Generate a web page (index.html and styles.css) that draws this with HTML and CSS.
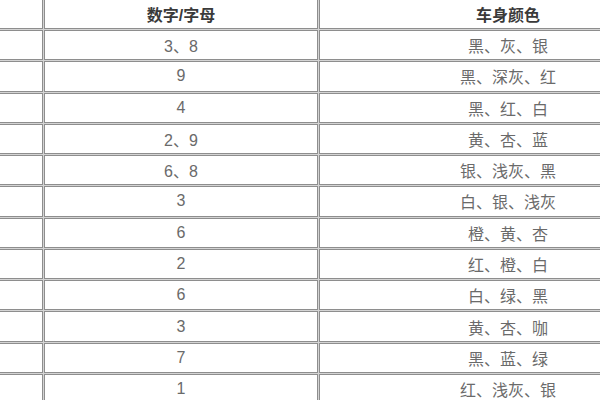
FILE: index.html
```html
<!DOCTYPE html>
<html lang="zh-CN">
<head>
<meta charset="utf-8">
<title>车牌与车身颜色</title>
<link rel="stylesheet" href="styles.css">
</head>
<body>
<div class="sheet">
  <div class="cell head"></div><div class="cell head">数字/字母</div><div class="cell head">车身颜色</div>
  <div class="cell"></div><div class="cell">3、8</div><div class="cell">黑、灰、银</div>
  <div class="cell"></div><div class="cell">9</div><div class="cell">黑、深灰、红</div>
  <div class="cell"></div><div class="cell">4</div><div class="cell">黑、红、白</div>
  <div class="cell"></div><div class="cell">2、9</div><div class="cell">黄、杏、蓝</div>
  <div class="cell"></div><div class="cell">6、8</div><div class="cell">银、浅灰、黑</div>
  <div class="cell"></div><div class="cell">3</div><div class="cell">白、银、浅灰</div>
  <div class="cell"></div><div class="cell">6</div><div class="cell">橙、黄、杏</div>
  <div class="cell"></div><div class="cell">2</div><div class="cell">红、橙、白</div>
  <div class="cell"></div><div class="cell">6</div><div class="cell">白、绿、黑</div>
  <div class="cell"></div><div class="cell">3</div><div class="cell">黄、杏、咖</div>
  <div class="cell"></div><div class="cell">7</div><div class="cell">黑、蓝、绿</div>
  <div class="cell"></div><div class="cell">1</div><div class="cell">红、浅灰、银</div>
</div>
</body>
</html>
```
FILE: styles.css
```css
html, body {
  margin: 0;
  padding: 0;
  background: #ffffff;
  overflow: hidden;
  width: 600px;
  height: 400px;
}
.sheet {
  display: grid;
  grid-template-columns: 100px 274px 378px;
  grid-auto-rows: 30.27px;
  gap: 1px;
  margin-left: -57px;
  margin-top: -1.27px;
  width: 754px;
  background: #d4d4d4;
  font-family: "Liberation Sans", "Noto Sans CJK SC", sans-serif;
  font-size: 16px;
  color: #6a6a6a;
}
.cell {
  box-sizing: border-box;
  border: 1px solid #8e8e8e;
  background: #ffffff;
  display: flex;
  align-items: center;
  justify-content: center;
  white-space: nowrap;
}
.head {
  font-weight: bold;
  color: #3a3a3a;
}
```
